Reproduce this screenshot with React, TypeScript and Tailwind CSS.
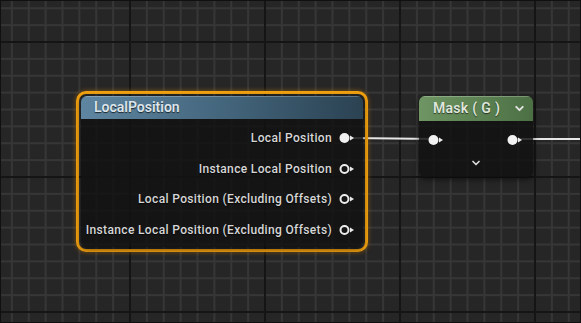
import { ChevronDown } from "lucide-react";

const outputs = [
  { label: "Local Position", connected: true },
  { label: "Instance Local Position", connected: false },
  { label: "Local Position (Excluding Offsets)", connected: false },
  { label: "Instance Local Position (Excluding Offsets)", connected: false },
];

function Pin({ filled }: { filled: boolean }) {
  return (
    <svg width="16" height="12" viewBox="0 0 16 12" className="shrink-0">
      {filled ? (
        <circle cx="5.5" cy="6" r="5" fill="#f2f2f2" />
      ) : (
        <circle cx="5.5" cy="6" r="4" fill="none" stroke="#ececec" strokeWidth="2" />
      )}
      <path d="M11 3.6 L15 6 L11 8.4 Z" fill="#ececec" />
    </svg>
  );
}

export default function App() {
  return (
    <div
      className="relative h-[323px] w-[581px] overflow-hidden border border-[#101010] bg-[#262626] font-['Roboto',sans-serif] bg-[linear-gradient(to_right,#151515_2px,transparent_2px),linear-gradient(to_bottom,#151515_2px,transparent_2px),linear-gradient(to_right,#363636_2px,transparent_2px),linear-gradient(to_bottom,#363636_2px,transparent_2px)] [background-size:135px_135px,135px_135px,16.875px_16.875px,16.875px_16.875px] [background-position:128px_40px,128px_40px,9.875px_6.25px,9.875px_6.25px]"
    >
      {/* wires */}
      <svg className="absolute inset-0" width="581" height="323">
        <path d="M350 137 C 390 137, 396 138, 434 138" stroke="#e6e6e6" strokeWidth="2" fill="none" />
        <path d="M516 138 L 581 138" stroke="#e6e6e6" strokeWidth="2" fill="none" />
      </svg>

      {/* LocalPosition node (selected) */}
      <div className="absolute left-[75px] top-[90px] h-[161px] w-[292px] rounded-[10px] border-[3px] border-[#f2a10f] p-[2px] shadow-[0_0_5px_rgba(255,150,0,0.45)]">
        <div className="flex h-full flex-col overflow-hidden rounded-[6px] bg-[#121212]/85 shadow-[0_2px_6px_rgba(0,0,0,0.6)]">
          <div className="flex h-[23px] items-center bg-linear-to-r from-[#5f86a1] via-[#44667d] to-[#2b4252] px-[13px] shadow-[inset_0_1px_0_rgba(255,255,255,0.25)]">
            <span className="text-[14px] font-semibold text-[#dde5eb] [text-shadow:0_1px_1px_rgba(0,0,0,0.7)]">
              LocalPosition
            </span>
          </div>
          <div className="flex flex-col items-end pr-[8px] pt-[4px]">
            {outputs.map((o) => (
              <div key={o.label} className="flex h-[30.6px] items-center gap-[7px]">
                <span className="text-[12px] font-medium tracking-[0.35px] text-[#d6d6d6] [text-shadow:0_1px_1px_rgba(0,0,0,0.8)]">
                  {o.label}
                </span>
                <Pin filled={o.connected} />
              </div>
            ))}
          </div>
        </div>
      </div>

      {/* Mask node */}
      <div className="absolute left-[418px] top-[95px] flex h-[81px] w-[114px] flex-col overflow-hidden rounded-[6px] bg-[#121212]/85 shadow-[0_2px_6px_rgba(0,0,0,0.6)]">
        <div className="flex h-[25px] items-center justify-between bg-linear-to-r from-[#6e9563] to-[#4c7044] pl-[14px] pr-[7px] shadow-[inset_0_1px_0_rgba(255,255,255,0.25)]">
          <span className="text-[14px] font-semibold tracking-[0.3px] text-[#dfe6dc] [text-shadow:0_1px_1px_rgba(0,0,0,0.6)]">
            Mask ( G )
          </span>
          <ChevronDown size={13} strokeWidth={3.5} className="text-[#e4e4e4]" />
        </div>
        <div className="flex h-[36px] items-center justify-between pl-[9px] pr-[10px] pt-[1px]">
          <Pin filled />
          <Pin filled />
        </div>
        <div className="flex justify-center">
          <ChevronDown size={12} strokeWidth={3.5} className="text-[#d8d8d8]" />
        </div>
      </div>
    </div>
  );
}
